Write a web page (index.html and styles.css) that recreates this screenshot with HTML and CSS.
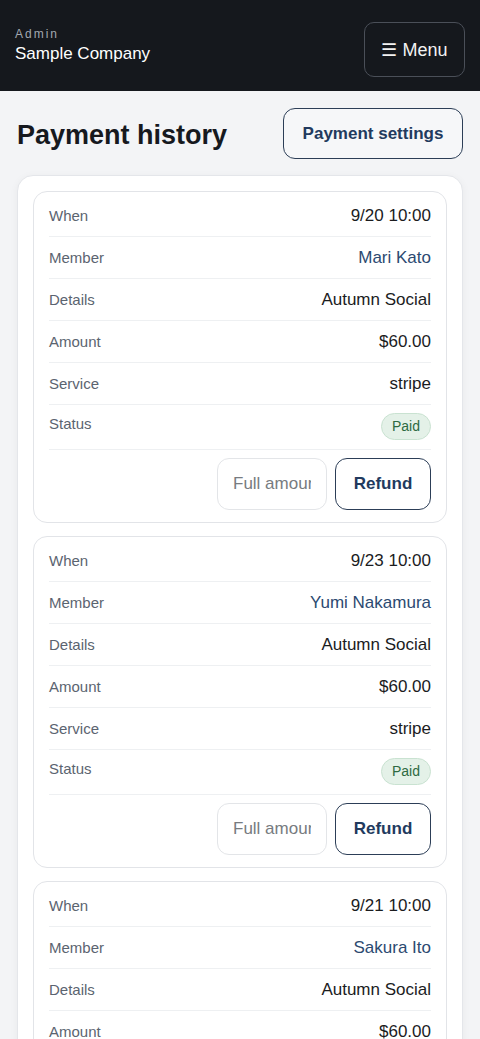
FILE: index.html
```html
<!DOCTYPE html>
<html lang="en">
  <head>
    <meta charset="UTF-8" />
    <meta name="viewport" content="width=device-width, initial-scale=1.0" />
    <title>Payment history</title>
    <link rel="stylesheet" href="styles.css">
  </head>
  <body>
    <header class="topbar">
      <div class="brand">
        <div class="brand-role">Admin</div>
        <div class="brand-name">Sample Company</div>
      </div>
      <button class="menu-btn">☰ Menu</button>
    </header>

    <main class="page">
      <div class="page-head">
        <h1>Payment history</h1>
        <button class="btn-outline">Payment settings</button>
      </div>

      <div class="panel">
        <div class="payment">
          <div class="row"><span class="label">When</span><span class="value">9/20 10:00</span></div>
          <div class="row"><span class="label">Member</span><a class="value link" href="#">Mari Kato</a></div>
          <div class="row"><span class="label">Details</span><span class="value">Autumn Social</span></div>
          <div class="row"><span class="label">Amount</span><span class="value">$60.00</span></div>
          <div class="row"><span class="label">Service</span><span class="value">stripe</span></div>
          <div class="row row-status"><span class="label">Status</span><span class="badge">Paid</span></div>
          <div class="actions">
            <input type="text" class="amount-input" placeholder="Full amount" />
            <button class="btn-refund">Refund</button>
          </div>
        </div>

        <div class="payment">
          <div class="row"><span class="label">When</span><span class="value">9/23 10:00</span></div>
          <div class="row"><span class="label">Member</span><a class="value link" href="#">Yumi Nakamura</a></div>
          <div class="row"><span class="label">Details</span><span class="value">Autumn Social</span></div>
          <div class="row"><span class="label">Amount</span><span class="value">$60.00</span></div>
          <div class="row"><span class="label">Service</span><span class="value">stripe</span></div>
          <div class="row row-status"><span class="label">Status</span><span class="badge">Paid</span></div>
          <div class="actions">
            <input type="text" class="amount-input" placeholder="Full amount" />
            <button class="btn-refund">Refund</button>
          </div>
        </div>

        <div class="payment">
          <div class="row"><span class="label">When</span><span class="value">9/21 10:00</span></div>
          <div class="row"><span class="label">Member</span><a class="value link" href="#">Sakura Ito</a></div>
          <div class="row"><span class="label">Details</span><span class="value">Autumn Social</span></div>
          <div class="row"><span class="label">Amount</span><span class="value">$60.00</span></div>
          <div class="row"><span class="label">Service</span><span class="value">stripe</span></div>
          <div class="row row-status"><span class="label">Status</span><span class="badge">Paid</span></div>
          <div class="actions">
            <input type="text" class="amount-input" placeholder="Full amount" />
            <button class="btn-refund">Refund</button>
          </div>
        </div>
      </div>
    </main>
  </body>
</html>
```

FILE: styles.css
```css
* {
  box-sizing: border-box;
}
body {
  margin: 0;
  font-family: "Liberation Sans", Arial, sans-serif;
  background-color: #f3f4f6;
  color: #16191e;
}
.topbar {
  display: flex;
  justify-content: space-between;
  align-items: flex-start;
  height: 91px;
  padding: 22px 15px 0;
  background-color: #15181d;
  color: #ffffff;
}
.brand {
  padding-top: 4px;
}
.brand-role {
  font-size: 12px;
  letter-spacing: 2px;
  color: #a3a8b0;
  line-height: 16px;
}
.brand-name {
  font-size: 17px;
  line-height: 22px;
  margin-top: 1px;
}
.menu-btn {
  width: 101px;
  height: 55px;
  background: transparent;
  color: #f2f2f2;
  border: 1px solid #4a4f58;
  border-radius: 10px;
  font-family: inherit;
  font-size: 18px;
  cursor: pointer;
}
.page {
  padding: 17px;
}
.page-head {
  display: flex;
  justify-content: space-between;
  align-items: center;
  margin-bottom: 16px;
}
.page-head h1 {
  margin: 3px 0 0;
  font-size: 27px;
  font-weight: bold;
  color: #16191e;
}
.btn-outline {
  width: 180px;
  height: 51px;
  background: #f6f7f9;
  color: #223a5e;
  border: 1.5px solid #2c3e57;
  border-radius: 12px;
  font-family: inherit;
  font-size: 17px;
  font-weight: bold;
  cursor: pointer;
}
.panel {
  background: #ffffff;
  border: 1px solid #e4e6ea;
  border-radius: 16px;
  box-shadow: 0 2px 8px rgba(0, 0, 0, 0.05);
  padding: 15px;
  display: flex;
  flex-direction: column;
  gap: 13px;
}
.payment {
  border: 1px solid #e2e4e8;
  border-radius: 14px;
  padding: 3px 15px 12px;
}
.row {
  display: flex;
  justify-content: space-between;
  align-items: center;
  padding: 10px 0;
  line-height: 21px;
  border-bottom: 1px solid #eef0f2;
}
.row-status {
  align-items: flex-start;
  padding: 8px 0 9px;
}
.label {
  font-size: 15px;
  color: #5b6470;
}
.value {
  font-size: 17px;
  color: #1b1c1e;
}
.link {
  color: #2c4a71;
  text-decoration: none;
}
.badge {
  display: inline-block;
  height: 27px;
  line-height: 25px;
  padding: 0 10px;
  border-radius: 14px;
  background: #e4f1e8;
  border: 1px solid #c9e2d1;
  color: #2e6a42;
  font-size: 14px;
}
.actions {
  display: flex;
  justify-content: flex-end;
  gap: 8px;
  margin-top: 8px;
}
.amount-input {
  width: 110px;
  height: 52px;
  padding: 0 15px;
  border: 1px solid #e3e5e8;
  border-radius: 12px;
  font-family: inherit;
  font-size: 17px;
  color: #1b1c1e;
}
.amount-input::placeholder {
  color: #777b80;
}
.btn-refund {
  width: 96px;
  height: 52px;
  background: #ffffff;
  color: #223a5e;
  border: 1.5px solid #2c3e57;
  border-radius: 12px;
  font-family: inherit;
  font-size: 17px;
  font-weight: bold;
  cursor: pointer;
}
```
